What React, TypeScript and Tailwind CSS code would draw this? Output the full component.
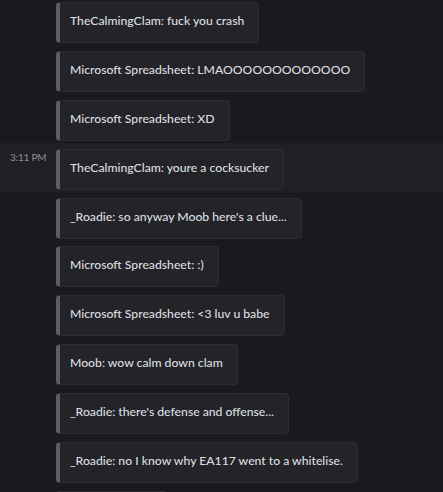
const MESSAGES = [
  { text: 'TheCalmingClam: fuck you crash' },
  { text: 'Microsoft Spreadsheet: LMAOOOOOOOOOOOOO' },
  { text: 'Microsoft Spreadsheet: XD' },
  { text: 'TheCalmingClam: youre a cocksucker', time: '3:11 PM' },
  { text: "_Roadie: so anyway Moob here's a clue..." },
  { text: 'Microsoft Spreadsheet: :)' },
  { text: 'Microsoft Spreadsheet: <3 luv u babe' },
  { text: 'Moob: wow calm down clam' },
  { text: "_Roadie: there's defense and offense..." },
  { text: '_Roadie: no I know why EA117 went to a whitelise.' },
  { text: '' },
];

export default function App() {
  return (
    <div
      className="h-[492px] w-[443px] overflow-hidden bg-[#1a1a1e] text-[#dbdee1]"
      style={{ fontFamily: 'Lato, "Noto Sans", sans-serif' }}
    >
      <div className="-mt-[4px] flex flex-col">
        {MESSAGES.map((m, i) => (
          <div
            key={i}
            className={`flex items-start pt-[6px] pb-[1.9px] ${m.time ? 'bg-[#202024]' : ''}`}
          >
            <div className="w-[56px] shrink-0 pl-[10px] pt-[1px] text-[10px] leading-[14px] tracking-[-0.2px] text-[#8e9098]">
              {m.time}
            </div>
            <div
              className={`flex h-[41px] items-start rounded-[4px] border border-l-[4px] border-[#2c2c31] border-l-[#5d5d63] bg-[#242428] pl-[10px] pr-[14px] pt-[10px] ${m.text ? 'w-fit' : 'w-[111px]'}`}
            >
              <span className="whitespace-nowrap text-[12.2px] font-medium leading-[16px]">{m.text}</span>
            </div>
          </div>
        ))}
      </div>
    </div>
  );
}
